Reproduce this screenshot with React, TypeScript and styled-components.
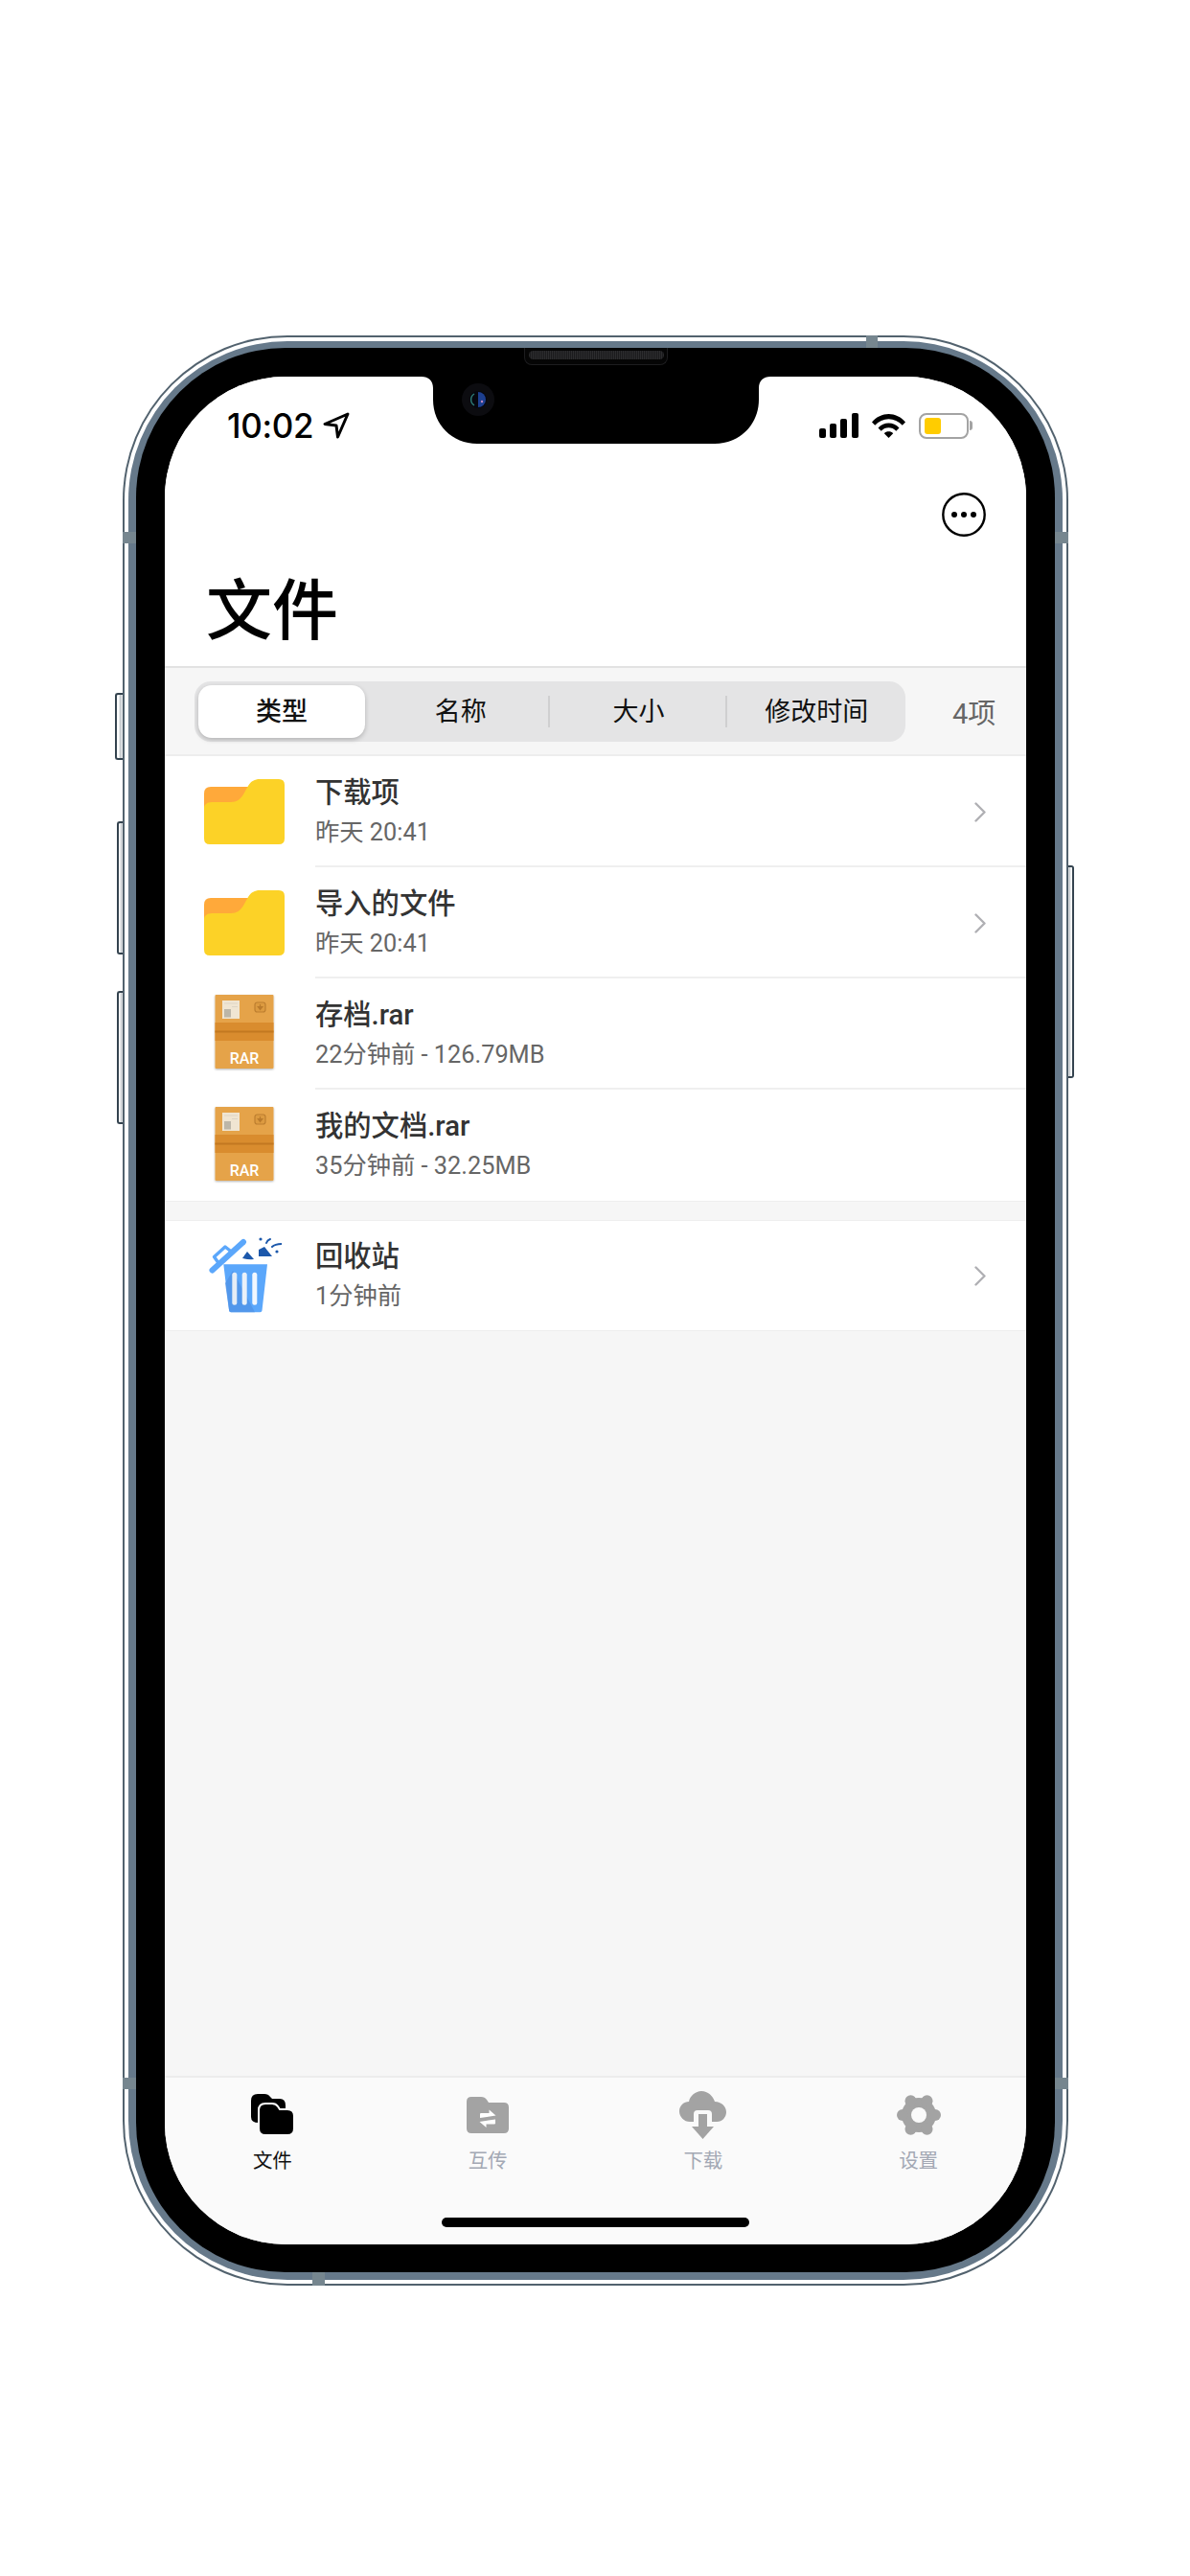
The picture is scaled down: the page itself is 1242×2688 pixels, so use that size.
import React from 'react';
import styled, { createGlobalStyle } from 'styled-components';

const Global = createGlobalStyle`
  html, body { margin: 0; padding: 0; background: #fff; }
  * { box-sizing: border-box; }
  body { font-family: Roboto, "Noto Sans CJK SC", sans-serif; }
`;
const Page = styled.div`
  width: 1242px; height: 2688px; padding: 350px 0 0 128px; background: #fff; overflow: hidden;
`;
const Shell = styled.div`
  position: relative; width: 987px; height: 2035px; padding: 2px;
  border-radius: 172px; background: #52626e;
`;
const WhiteRing = styled.div`
  height: 100%; padding: 4px; border-radius: 170px; background: #fff;
`;
const SteelRing = styled.div`
  height: 100%; padding: 7px 8px 8px 8px; border-radius: 166px;
  background: #66798a;
`;
const Bezel = styled.div`
  position: relative; height: 100%; padding: 30px 29px 28px 30px; border-radius: 156px; background: #000;
`;
const Screen = styled.div`
  width: 899px; height: 1949px; border-radius: 126px; overflow: hidden;
  background: #f6f6f6; display: flex; flex-direction: column;
`;
const SideButton = styled.div<{ $top: number; $h: number; $right?: boolean; $w?: number }>`
  position: absolute; top: ${p => p.$top}px; height: ${p => p.$h}px; width: ${p => p.$w ?? 6}px;
  ${p => (p.$right ? `right: -${p.$w ?? 6}px;` : `left: -${p.$w ?? 6}px;`)}
  border: 2px solid #34434f; border-${p => (p.$right ? 'left' : 'right')}: none;
  border-radius: ${p => (p.$right ? '0 3px 3px 0' : '3px 0 0 3px')};
  background: linear-gradient(${p => (p.$right ? '270deg' : '90deg')}, #fff 0 30%, #c4c9cd 60%, #eef0f1 100%);
`;
const Band = styled.div<{ $top?: number; $bottom?: number; $left?: number; $right?: number; $w: number; $h: number }>`
  position: absolute; background: #76868f; width: ${p => p.$w}px; height: ${p => p.$h}px;
  ${p => (p.$top !== undefined ? `top: ${p.$top}px;` : '')}
  ${p => (p.$bottom !== undefined ? `bottom: ${p.$bottom}px;` : '')}
  ${p => (p.$left !== undefined ? `left: ${p.$left}px;` : '')}
  ${p => (p.$right !== undefined ? `right: ${p.$right}px;` : '')}
`;
const Notch = styled.svg`
  position: absolute; left: 298px; top: 30px; width: 364px; height: 72px; display: block;
`;
const Speaker = styled.div`
  position: absolute; left: 405px; top: 0; width: 150px; height: 18px;
  border: 1px solid #1d1d1f; border-top: none; border-radius: 0 0 8px 8px; background: #050505;
  display: flex; justify-content: center; align-items: flex-start; padding-top: 3px;
`;
const Grille = styled.div`
  width: 141px; height: 9px; border-radius: 5px;
  background: repeating-linear-gradient(90deg, #2c2c2e 0 1px, #1b1b1d 1px 2px);
`;
const Camera = styled.svg`
  position: absolute; left: 340px; top: 37px; width: 34px; height: 34px;
`;

const StatusBar = styled.div`
  height: 110px; background: #fff; flex: none; display: flex; justify-content: space-between;
  padding: 36px 60px 0 65px;
`;
const StatusLeft = styled.div`
  display: flex; align-items: flex-start; gap: 10px; height: 30px;
`;
const Clock = styled.span`
  font-family: Inter, sans-serif; font-size: 35px; line-height: 30px; font-weight: 500;
  letter-spacing: -0.3px; color: #000;
`;
const StatusRight = styled.div`
  display: flex; align-items: flex-start; gap: 14px; padding-top: 2px;
`;
const Battery = styled.div`
  position: relative; width: 52px; height: 27px; border: 2px solid #a3a3a3; border-radius: 8px;
  background: #fff; padding: 3px 4px;
`;
const BatteryFill = styled.div`
  width: 17px; height: 100%; background: #ffcc00; border-radius: 3px;
`;
const BatteryNub = styled.div`
  position: absolute; right: -6px; top: 6px; width: 3px; height: 10px; background: #a3a3a3; border-radius: 0 3px 3px 0;
`;
const Header = styled.div`
  flex: none; height: 192px; background: #fff; display: flex; flex-direction: column; padding: 11px 42px 0 43px;
`;
const HeaderActions = styled.div`
  display: flex; justify-content: flex-end;
`;
const Title = styled.h1`
  margin: 22px 0 0; font-family: "Noto Sans CJK SC", sans-serif; font-size: 69px; line-height: 100px; font-weight: 500; color: #000;
`;
const SortBar = styled.div`
  flex: none; height: 94px; background: #f6f6f6; display: flex; align-items: center;
  border-top: 2px solid #e2e2e2; border-bottom: 2px solid #ededed; padding: 0 0 0 31px;
`;
const Segments = styled.div`
  width: 742px; height: 63px; border-radius: 17px; background: #e4e4e5; padding: 4px 0 4px 4px;
  display: flex; align-items: stretch; flex: none;
`;
const Segment = styled.div<{ $active?: boolean; $sep?: boolean }>`
  flex: ${p => (p.$active ? '0 0 174px' : '1')}; margin-right: ${p => (p.$active ? 7 : 0)}px;
  display: flex; align-items: center; justify-content: center; position: relative; padding-bottom: 4px;
  font-family: "Noto Sans CJK SC", sans-serif; font-size: 27px; color: #111; border-radius: 14px;
  font-weight: ${p => (p.$active ? 500 : 400)};
  ${p => (p.$active ? 'background:#fff; box-shadow: 0 2px 5px rgba(0,0,0,.22);' : '')}
  ${p => (p.$sep ? `&::after { content:''; position:absolute; right:0; top:11px; bottom:11px; width:2px; background:#cfcfd0; }` : '')}
`;
const Count = styled.span`
  margin-left: 49px; font-size: 29px; color: #666; font-family: Roboto, "Noto Sans CJK SC", sans-serif;
`;
const Group = styled.div<{ $gap?: number }>`
  flex: none; background: #fff; margin-top: ${p => p.$gap ?? 0}px;
  border-top: ${p => (p.$gap ? '1px solid #eee' : 'none')}; border-bottom: 1px solid #eee;
`;
const Row = styled.div<{ $h?: number }>`
  height: ${p => p.$h ?? 116}px; display: flex; align-items: center; position: relative;
`;
const IconSlot = styled.div<{ $lift?: number }>`
  width: 157px; flex: none; display: flex; justify-content: center; padding-left: 9px;
  padding-bottom: ${p => p.$lift ?? 0}px;
`;
const RowBody = styled.div<{ $sep?: boolean }>`
  flex: 1; height: 100%; display: flex; align-items: center; justify-content: space-between;
  padding-right: 42px; padding-top: ${p => (p.$sep ? 2 : 0)}px;
  border-bottom: ${p => (p.$sep ? '2px solid #efefef' : 'none')};
`;
const RowText = styled.div`
  display: flex; flex-direction: column; padding-top: 1px;
`;
const RowTitle = styled.div`
  font-size: 29.3px; line-height: 40px; color: #333; font-weight: 500;
`;
const RowSub = styled.div`
  font-size: 25.3px; line-height: 40px; color: #666; margin-top: 2px;
`;
const Spacer = styled.div`
  flex: 1;
`;
const TabBar = styled.div`
  flex: none; height: 176px; background: #fafafa; border-top: 2px solid #ececec;
  display: grid; grid-template-columns: repeat(4, 1fr); position: relative;
`;
const Tab = styled.div`
  display: flex; flex-direction: column; align-items: center; padding-top: 12px;
`;
const TabIcon = styled.div`
  height: 53px; display: flex; align-items: center; justify-content: center;
`;
const TabLabel = styled.div<{ $active?: boolean }>`
  font-family: "Noto Sans CJK SC", sans-serif; font-size: 20.5px; line-height: 40px;
  color: ${p => (p.$active ? '#111' : '#a3a8b4')};
`;
const HomeIndicator = styled.div`
  position: absolute; left: 289px; bottom: 18px; width: 321px; height: 10px; border-radius: 5px; background: #000;
`;

const Folder = () => (
  <svg width="84" height="68" viewBox="0 0 84 68">
    <path d="M0 15Q0 8 7 8H50V30H0Z" fill="#ffa93a" />
    <path d="M0 30C0 27 3 24 8 24H28C34 24 38 21 41 16L46 7C49 2 53 0 58 0H78Q84 0 84 6V62Q84 68 78 68H6Q0 68 0 62Z" fill="#fcd227" />
  </svg>
);
const Rar = () => (
  <svg width="62" height="78" viewBox="0 0 62 78" style={{ overflow: 'visible' }}>
    <defs>
      <filter id="rs" x="-10%" y="-10%" width="120%" height="120%">
        <feDropShadow dx="0" dy="1" stdDeviation="1" floodColor="#000" floodOpacity=".3" />
      </filter>
    </defs>
    <rect x="0.5" y="0" width="61" height="77" rx="1" fill="#e5a348" filter="url(#rs)" />
    <rect x="0.5" y="29" width="61" height="19" fill="#d98c2e" />
    <rect x="0.5" y="37.5" width="61" height="2" fill="#c27821" />
    <rect x="8" y="6" width="18" height="19" fill="#f0e5d2" />
    <rect x="10" y="15" width="7" height="8.5" fill="#bcb6a8" />
    <rect x="10" y="8.5" width="14" height="1" fill="#ddd5c5" />
    <rect x="18" y="12" width="6" height="1" fill="#ddd5c5" />
    <rect x="42" y="8" width="11" height="10" rx="2.5" fill="#dc9a40" stroke="#bd7f30" strokeWidth="1.2" />
    <path d="M47.5 10V13.5M45.2 12.5L47.5 15.5L49.8 12.5Z" fill="#b97a2c" stroke="#b97a2c" strokeWidth="1.2" />
    <text x="31" y="71.5" textAnchor="middle" fontFamily="Roboto, sans-serif" fontWeight="500" fontSize="16" fill="#fff">RAR</text>
  </svg>
);
const Trash = () => (
  <svg width="78" height="80" viewBox="6 10 78 80">
    <path d="M23.3 38.3H69L63.5 86.5Q63.3 88.3 61.5 88.3H31Q29.3 88.3 29.1 86.5Z" fill="#5ba7fb" />
    <path d="M33 45L56 88.3H31Q29.3 88.3 29.1 86.5L25 58Z" fill="#4f92e6" opacity=".75" />
    <rect x="32.3" y="46.7" width="5" height="34" rx="2.5" fill="#e6edf6" />
    <rect x="42.7" y="46.7" width="5" height="34" rx="2.5" fill="#eaf1f9" />
    <rect x="53.3" y="46.7" width="5" height="34" rx="2.5" fill="#f2f7fe" />
    <path d="M11.5 44.5L44 15" stroke="#5ba7fb" strokeWidth="6" strokeLinecap="round" />
    <path d="M18.5 37.5L13.5 30.5L25 20L32 25.5" fill="none" stroke="#5ba7fb" strokeWidth="3.4" strokeLinejoin="round" />
    <path d="M43 32L48 25L55 33Q49 33.5 43 32Z" fill="#1c58ab" />
    <path d="M60 23L66 20L74 30L60 30Z" fill="#1c58ab" />
    <circle cx="62" cy="12" r="1.6" fill="#1c58ab" />
    <path d="M68 16Q69 13 72 12" fill="none" stroke="#1c58ab" strokeWidth="2" strokeLinecap="round" />
    <path d="M74 20Q77 17 85 17" fill="none" stroke="#1c58ab" strokeWidth="2" strokeLinecap="round" />
    <circle cx="79" cy="25" r="1.6" fill="#1c58ab" />
  </svg>
);
const Chevron = () => (
  <svg width="12" height="21" viewBox="0 0 12 21">
    <path d="M1.5 1.5L10.5 10.5L1.5 19.5" fill="none" stroke="#b0b0b4" strokeWidth="2.4" strokeLinecap="round" strokeLinejoin="round" />
  </svg>
);
const More = () => (
  <svg width="46" height="46" viewBox="0 0 46 46">
    <circle cx="23" cy="23" r="21.7" fill="none" stroke="#000" strokeWidth="2.4" />
    <circle cx="13" cy="23" r="3" />
    <circle cx="23" cy="23" r="3" />
    <circle cx="33" cy="23" r="3" />
  </svg>
);

const items = [
  { t: '下载项', s: '昨天 20:41', icon: <Folder />, chev: true, lift: 0 },
  { t: '导入的文件', s: '昨天 20:41', icon: <Folder />, chev: true, lift: 0 },
  { t: '存档.rar', s: '22分钟前 - 126.79MB', icon: <Rar />, chev: false, lift: 5 },
  { t: '我的文档.rar', s: '35分钟前 - 32.25MB', icon: <Rar />, chev: false, lift: 3 },
];

const gearLobes = [[40, 22], [31.5, 7.3], [14.5, 7.3], [6, 22], [14.5, 36.7], [31.5, 36.7]];

export default function App() {
  return (
    <Page>
      <Global />
      <Shell>
        <SideButton $top={373} $h={70} $w={8} />
        <SideButton $top={507} $h={139} />
        <SideButton $top={684} $h={139} />
        <SideButton $right $top={553} $h={222} />
        <WhiteRing>
          <SteelRing>
            <Bezel>
              <Screen>
                <StatusBar>
                  <StatusLeft>
                    <Clock>10:02</Clock>
                    <svg width="28" height="28" viewBox="0 0 28 28" style={{ marginTop: 1 }}>
                      <path d="M26 2L2 12.5L14 14L15.5 26Z" fill="none" stroke="#000" strokeWidth="3" strokeLinejoin="round" />
                    </svg>
                  </StatusLeft>
                  <StatusRight>
                    <svg width="41" height="26" viewBox="0 0 41 26">
                      <rect x="0" y="16" width="7" height="10" rx="2" />
                      <rect x="11" y="11" width="7" height="15" rx="2" />
                      <rect x="22" y="6" width="7" height="20" rx="2" />
                      <rect x="34" y="0" width="7" height="26" rx="2" />
                    </svg>
                    <svg width="35" height="26" viewBox="0 0 35 26">
                      <path d="M0 9.5C9.5 -2 25.5 -2 35 9.5L31.8 12.8C24 4 11 4 3.2 12.8Z" />
                      <path d="M6.5 15.5C12.5 8.8 22.5 8.8 28.5 15.5L25.3 18.8C21 14.2 14 14.2 9.7 18.8Z" />
                      <path d="M12.8 21.2C15.2 18.6 19.8 18.6 22.2 21.2L17.5 26Z" />
                    </svg>
                    <Battery>
                      <BatteryFill />
                      <BatteryNub />
                    </Battery>
                  </StatusRight>
                </StatusBar>
                <Header>
                  <HeaderActions>
                    <More />
                  </HeaderActions>
                  <Title>文件</Title>
                </Header>
                <SortBar>
                  <Segments>
                    <Segment $active>类型</Segment>
                    <Segment $sep>名称</Segment>
                    <Segment $sep>大小</Segment>
                    <Segment>修改时间</Segment>
                  </Segments>
                  <Count>4项</Count>
                </SortBar>
                <Group>
                  {items.map((it, i) => (
                    <Row key={it.t}>
                      <IconSlot $lift={it.lift}>{it.icon}</IconSlot>
                      <RowBody $sep={i < items.length - 1}>
                        <RowText>
                          <RowTitle>{it.t}</RowTitle>
                          <RowSub>{it.s}</RowSub>
                        </RowText>
                        {it.chev && <Chevron />}
                      </RowBody>
                    </Row>
                  ))}
                </Group>
                <Group $gap={19}>
                  <Row $h={114}>
                    <IconSlot><Trash /></IconSlot>
                    <RowBody>
                      <RowText>
                        <RowTitle>回收站</RowTitle>
                        <RowSub>1分钟前</RowSub>
                      </RowText>
                      <Chevron />
                    </RowBody>
                  </Row>
                </Group>
                <Spacer />
                <TabBar>
                  <Tab>
                    <TabIcon>
                      <svg width="45" height="43" viewBox="0 0 45 43">
                        <path d="M0 7Q0 0 7 0H14Q18 0 20 3L22 5H30Q36 5 36 12V30H8Q0 30 0 24Z" fill="#000" />
                        <path d="M8 17Q8 10 15 10H22Q26 10 28 13L30 16H38Q45 16 45 23V36Q45 43 38 43H15Q8 43 8 36Z" fill="#000" stroke="#fafafa" strokeWidth="2" />
                      </svg>
                    </TabIcon>
                    <TabLabel $active>文件</TabLabel>
                  </Tab>
                  <Tab>
                    <TabIcon>
                      <svg width="44" height="38" viewBox="0 0 44 38">
                        <path d="M0 5Q0 0 5 0H15Q19 0 21 3L23 6H39Q44 6 44 11V33Q44 38 39 38H5Q0 38 0 33Z" fill="#a3a3a3" />
                        <path d="M14 22V18Q14 17 15 17H23.5V13.5L30.5 19.5L14 22Z" fill="#fff" />
                        <path d="M30 23.5V27.5Q30 28.5 29 28.5H20.5V32L13.5 26L30 23.5Z" fill="#fff" />
                      </svg>
                    </TabIcon>
                    <TabLabel>互传</TabLabel>
                  </Tab>
                  <Tab>
                    <TabIcon>
                      <svg width="49" height="50" viewBox="0 0 49 50">
                        <path d="M11 32C5 32 0 27 0 21C0 15 5 11 10 11C11 5 17 0 23 0C30 0 35 5 37 11C44 11 49 16 49 22C49 27 45 32 39 32H34V24Q34 20 30 20H19Q15 20 15 24V32Z" fill="#a3a3a3" />
                        <path d="M20 24H29V37H36L24.5 50L13 37H20Z" fill="#a3a3a3" />
                      </svg>
                    </TabIcon>
                    <TabLabel>下载</TabLabel>
                  </Tab>
                  <Tab>
                    <TabIcon>
                      <svg width="46" height="44" viewBox="0 0 46 44">
                        <circle cx="23" cy="22" r="18" fill="#a3a3a3" />
                        {gearLobes.map(([cx, cy]) => (
                          <circle key={`${cx}-${cy}`} cx={cx} cy={cy} r="6" fill="#a3a3a3" />
                        ))}
                        <circle cx="23" cy="22" r="8" fill="#fafafa" />
                      </svg>
                    </TabIcon>
                    <TabLabel>设置</TabLabel>
                  </Tab>
                  <HomeIndicator />
                </TabBar>
              </Screen>
              <Notch viewBox="0 0 364 72">
                <path d="M0 0C7 0 12 4 12 12V24C12 50 32 70 58 70H306C332 70 352 50 352 24V12C352 4 357 0 364 0Z" fill="#000" />
              </Notch>
              <Speaker><Grille /></Speaker>
              <Camera viewBox="0 0 34 34">
                <circle cx="17" cy="17" r="17" fill="#0c0c10" />
                <circle cx="17" cy="17" r="9" fill="#05070f" />
                <path d="M17 9A8 8 0 0 1 17 25Z" fill="#1d3f8f" />
                <path d="M13 11A7 7 0 0 0 13 23" fill="none" stroke="#2f7f78" strokeWidth="1.4" />
                <circle cx="21" cy="19" r="1.2" fill="#c48ac0" />
              </Camera>
            </Bezel>
          </SteelRing>
        </WhiteRing>
        <Band $top={205} $left={0} $w={14} $h={12} />
        <Band $top={205} $right={0} $w={14} $h={12} />
        <Band $bottom={205} $left={0} $w={14} $h={12} />
        <Band $bottom={205} $right={0} $w={14} $h={12} />
        <Band $top={0} $left={776} $w={12} $h={13} />
        <Band $bottom={0} $left={198} $w={13} $h={14} />
      </Shell>
    </Page>
  );
}
